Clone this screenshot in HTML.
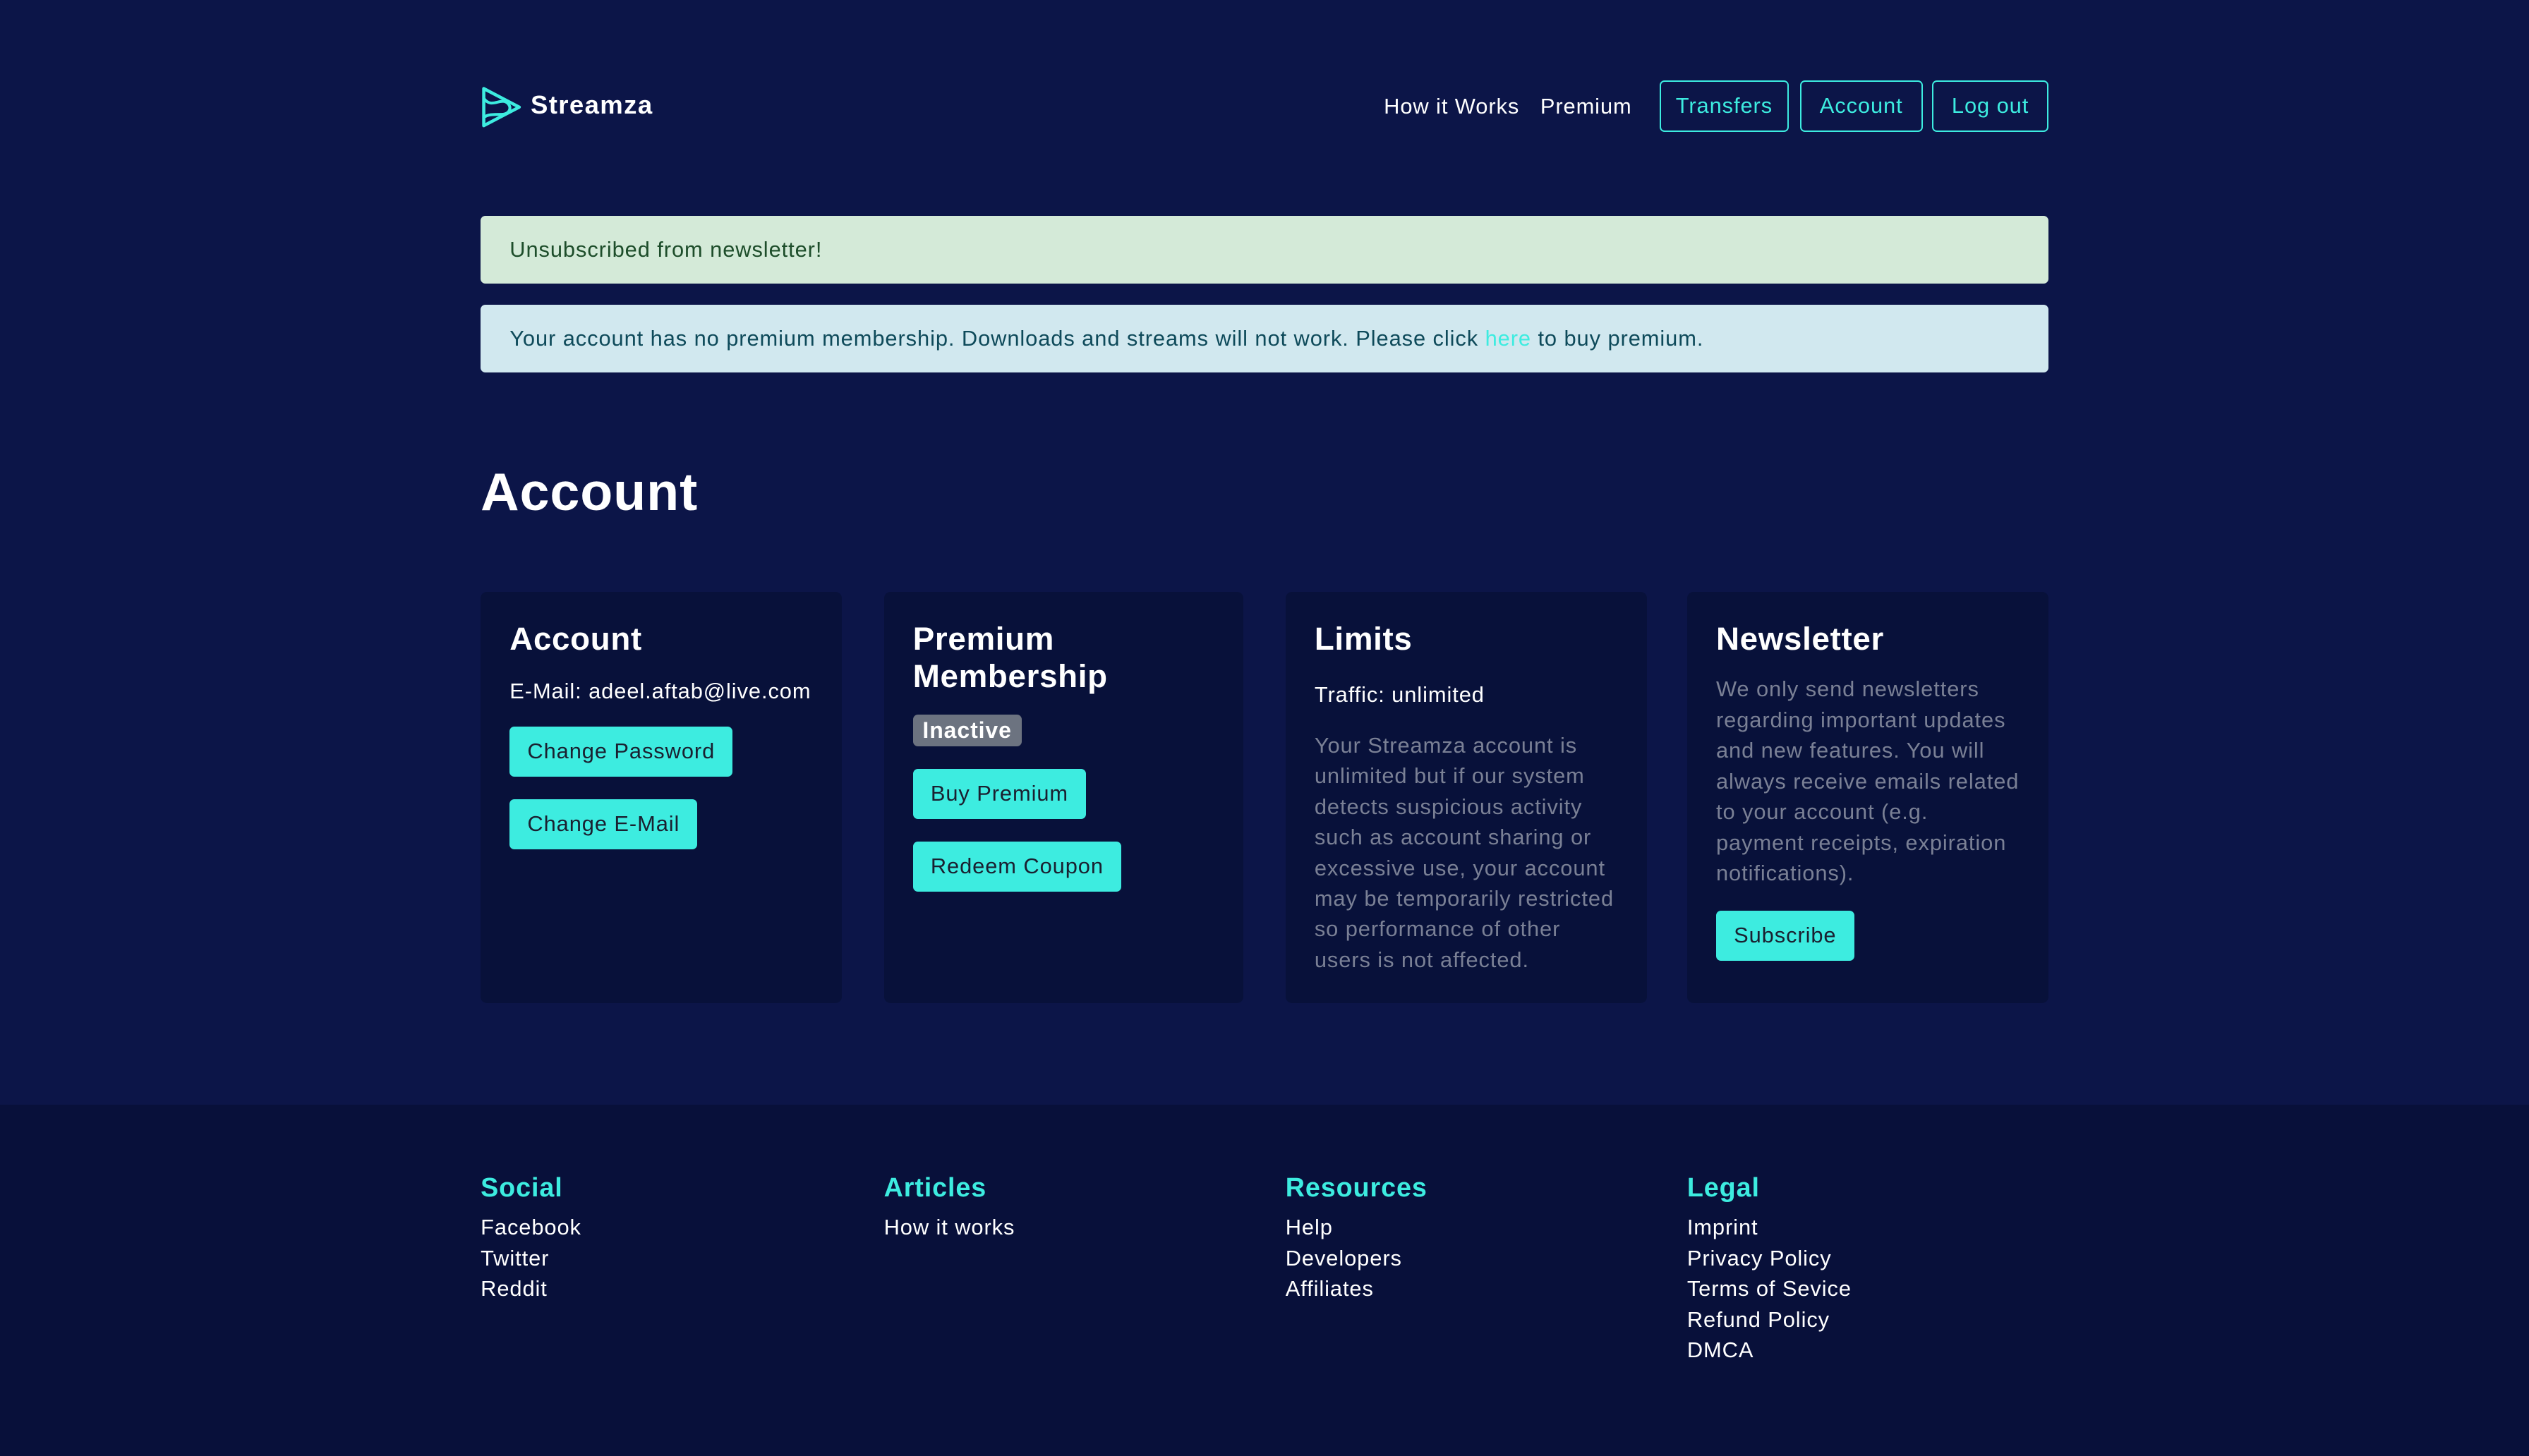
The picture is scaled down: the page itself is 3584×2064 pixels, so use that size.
<!DOCTYPE html>
<html><head><meta charset="utf-8"><style>
*{box-sizing:border-box;margin:0;padding:0}
html,body{width:1568px;height:903px;overflow:hidden}
body{zoom:2.2857;background:#0c1548;font-family:"Liberation Sans",sans-serif;color:#fff;font-size:13.5px;position:relative;letter-spacing:0.4px}
.abs{position:absolute}
.nav a{position:absolute;top:50px;height:32px;line-height:32px;font-size:13.5px;color:#fff}
.nb{border:1px solid #3dece0;border-radius:3px;color:#3dece0!important;text-align:center;line-height:30px!important}
.alert{position:absolute;left:298px;width:972px;height:42px;border-radius:3px;line-height:42px;padding-left:18px;font-size:13.5px}
.card{position:absolute;top:367px;width:224px;height:255px;background:#08113a;border-radius:4px;padding:18px}
.card h3{font-size:20px;font-weight:bold;line-height:23px;letter-spacing:0.3px}
.btn{display:inline-block;background:#3dece0;color:#1a2030;border-radius:3px;height:31px;line-height:31px;padding:0 11px;font-size:13.5px}
.muted{color:#7a8095;line-height:19px}
footer{position:absolute;left:0;top:685px;width:1568px;height:218px;background:#08103a}
.col{position:absolute;top:42px}
.col h4{color:#3dece0;font-size:16.5px;font-weight:bold;margin-bottom:6px}
.col div{line-height:19px}
</style></head><body>
<svg class="abs" style="left:298px;top:53px" width="26" height="27" viewBox="0 0 26 27"><path d="M2 2 L24 13.5 L2 25 Z" fill="none" stroke="#3dece0" stroke-width="2" stroke-linejoin="round"/><path d="M2 8 C6 14 11 9 15 10 C20 12 19 18 13 18 C8 18 4 18 2 20" fill="none" stroke="#3dece0" stroke-width="1.8"/></svg>
<div class="abs" style="left:329px;top:56px;font-size:16px;font-weight:bold;letter-spacing:0.6px">Streamza</div>
<div class="nav">
<a style="left:858px">How it Works</a>
<a style="left:955px">Premium</a>
<a class="nb" style="left:1029px;width:80px">Transfers</a>
<a class="nb" style="left:1116px;width:76px">Account</a>
<a class="nb" style="left:1198px;width:72px">Log out</a>
</div>
<div class="alert" style="top:134px;background:#d4ead8;color:#1d4d2a">Unsubscribed from newsletter!</div>
<div class="alert" style="top:189px;background:#d1e8ef;color:#0e4a5a">Your account has no premium membership. Downloads and streams will not work. Please click <span style="color:#3dece0">here</span> to buy premium.</div>
<div class="abs" style="left:298px;top:286px;font-size:33px;font-weight:bold">Account</div>
<div class="card" style="left:298px"><h3>Account</h3>
<div style="margin-top:13px">E-Mail: adeel.aftab@live.com</div>
<div class="btn" style="margin-top:14px">Change Password</div><br>
<div class="btn" style="margin-top:14px">Change E-Mail</div></div>
<div class="card" style="left:548px;width:223px"><h3>Premium<br>Membership</h3>
<div style="display:inline-block;margin-top:12px;background:#6c7380;color:#fff;font-weight:bold;font-size:14px;padding:0 6px;height:20px;line-height:20px;border-radius:3px">Inactive</div><br>
<div class="btn" style="margin-top:14px">Buy Premium</div><br>
<div class="btn" style="margin-top:14px">Redeem Coupon</div></div>
<div class="card" style="left:797px"><h3>Limits</h3>
<div style="margin-top:15px">Traffic: unlimited</div>
<div class="muted" style="margin-top:14px">Your Streamza account is unlimited but if our system detects suspicious activity such as account sharing or excessive use, your account may be temporarily restricted so performance of other users is not affected.</div></div>
<div class="card" style="left:1046px"><h3>Newsletter</h3>
<div class="muted" style="margin-top:10px">We only send newsletters regarding important updates and new features. You will always receive emails related to your account (e.g. payment receipts, expiration notifications).</div>
<div class="btn" style="margin-top:14px">Subscribe</div></div>
<footer>
<div class="col" style="left:298px"><h4>Social</h4><div>Facebook</div><div>Twitter</div><div>Reddit</div></div>
<div class="col" style="left:548px"><h4>Articles</h4><div>How it works</div></div>
<div class="col" style="left:797px"><h4>Resources</h4><div>Help</div><div>Developers</div><div>Affiliates</div></div>
<div class="col" style="left:1046px"><h4>Legal</h4><div>Imprint</div><div>Privacy Policy</div><div>Terms of Sevice</div><div>Refund Policy</div><div>DMCA</div></div>
</footer>
</body></html>
